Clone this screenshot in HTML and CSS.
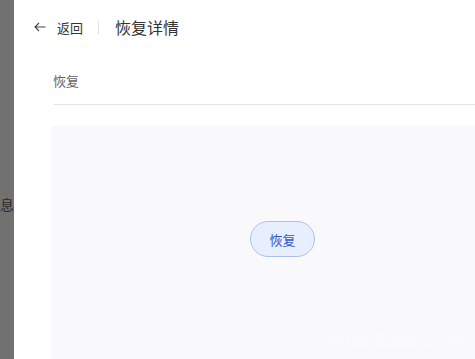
FILE: index.html
```html
<!DOCTYPE html>
<html lang="zh-CN">
<head>
    <meta charset="UTF-8">
    <title>恢复详情</title>
    <link rel="stylesheet" href="styles.css">
</head>
<body>
    <div class="page">
        <div class="side">
            <span class="side-text">信息</span>
        </div>
        <div class="panel">
            <div class="header">
                <svg class="back-icon" width="12" height="10" viewBox="0 0 12 10">
                    <path d="M11.5 5H1M5 1 1 5l4 4" fill="none" stroke="#444" stroke-width="1.1"/>
                </svg>
                <span class="back-text">返回</span>
                <span class="divider"></span>
                <h1 class="title">恢复详情</h1>
            </div>

            <div class="tabs">
                <span class="tab">恢复</span>
            </div>

            <div class="content">
                <button class="restore-button">恢复</button>
            </div>
        </div>
    </div>
    <div class="watermark">WinterSakura.com</div>
</body>
</html>
```

FILE: styles.css
```css
/* 重置样式 */
* {
    margin: 0;
    padding: 0;
    box-sizing: border-box;
}

body {
    font-family: "Noto Sans CJK SC", "Liberation Sans", sans-serif;
    color: #333;
    background-color: #fff;
    overflow: hidden;
}

.page {
    display: flex;
    height: 359px;
}

/* 左侧遮罩 */
.side {
    width: 14px;
    flex-shrink: 0;
    background-color: #717171;
    display: flex;
    justify-content: flex-end;
    padding-top: 195px;
    overflow: hidden;
}

.side-text {
    font-size: 14px;
    line-height: 18px;
    color: #2b2b2b;
    white-space: nowrap;
    height: 18px;
}

/* 主面板 */
.panel {
    flex: 1;
    display: flex;
    flex-direction: column;
    background-color: #fff;
}

.header {
    display: flex;
    align-items: center;
    height: 54px;
    padding-left: 20px;
}

.back-icon {
    display: block;
}

.back-text {
    margin-left: 11px;
    font-size: 13px;
    color: #333;
}

.divider {
    width: 1px;
    height: 13px;
    margin-left: 15px;
    background-color: #e2e2e2;
}

.title {
    margin-left: 16px;
    font-size: 16px;
    font-weight: normal;
    color: #333;
}

/* 标签栏 */
.tabs {
    margin-left: 40px;
    height: 51px;
    padding-top: 19px;
    border-bottom: 1px solid #e3e3e3;
}

.tab {
    display: block;
    margin-left: -1px;
    font-size: 13px;
    line-height: 16px;
    color: #666;
}

/* 内容区 */
.content {
    flex: 1;
    margin: 21px 0 0 37px;
    padding: 95px 0 0 199px;
    background-color: #f9f9fb;
}

.restore-button {
    width: 65px;
    height: 36px;
    border: 1px solid #a9c1ec;
    border-radius: 18px;
    background-color: #e7efff;
    color: #2f57c6;
    font-family: inherit;
    font-size: 13px;
    cursor: pointer;
}

.watermark {
    position: absolute;
    right: 10px;
    bottom: 8px;
    font-family: "Liberation Sans", sans-serif;
    font-size: 17px;
    color: #fcfcfd;
}
```
